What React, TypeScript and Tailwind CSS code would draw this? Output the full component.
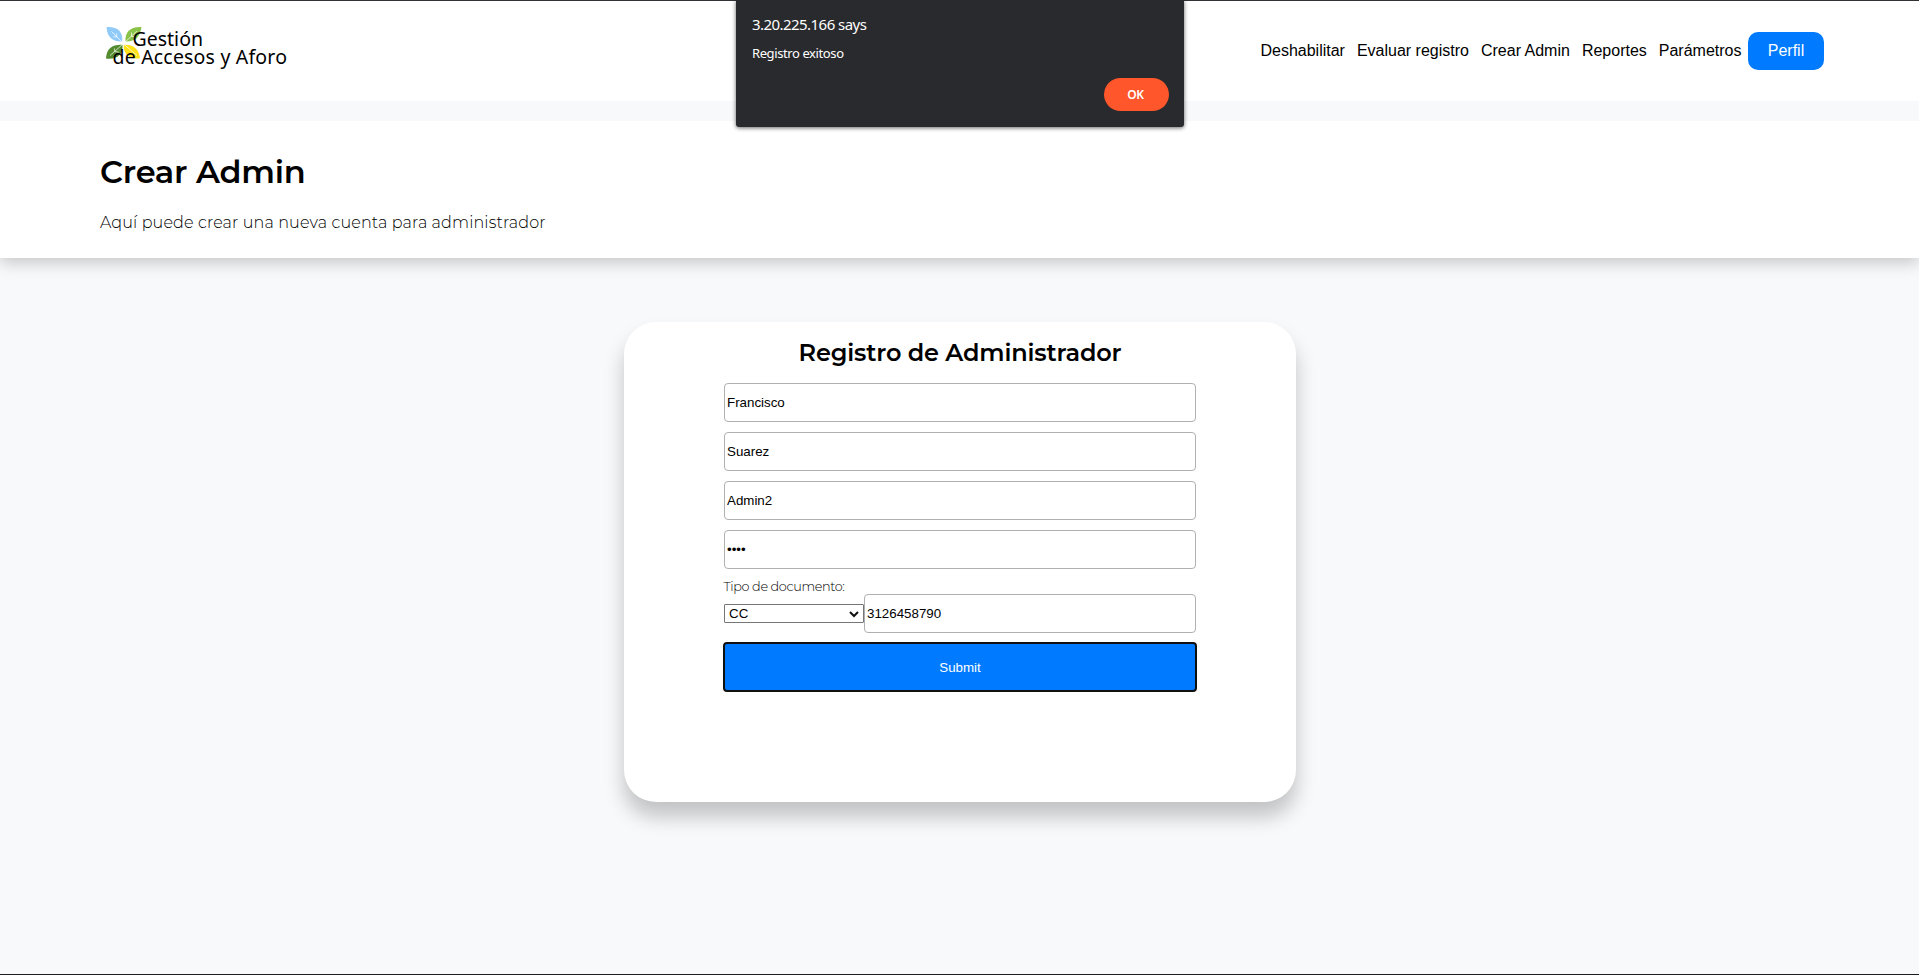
import React from "react";

const navLinks = ["Deshabilitar", "Evaluar registro", "Crear Admin", "Reportes", "Parámetros"];

const fields = [
  { id: "nombre", type: "text", value: "Francisco" },
  { id: "apellido", type: "text", value: "Suarez" },
  { id: "usuario", type: "text", value: "Admin2" },
  { id: "clave", type: "password", value: "1234" },
];

const inputClass =
  "block h-[39px] w-full rounded-[4px] border border-[#b0b0b0] bg-white px-[2.5px] font-['Liberation_Sans',Arial,sans-serif] text-[13.33px] text-black outline-none";

function Logo() {
  return (
    <svg className="h-[60px] w-[200px]" viewBox="100 10 200 60" role="img" aria-label="Gestión de Accesos y Aforo">
      <path d="M106.500 27.200c10.500-.8 16.500 4 15.700 14.300-9.500.3-15.200-4.700-15.700-14.300z" fill="#90caf9" />
      <path d="M141.500 27c-10.500-.8-16.800 4.500-16 14.500 10 .3 14.500-4.500 16-14.500z" fill="#8bc34a" />
      <path d="M106 58.500c.5-10.500 6.500-14.300 16.500-13.800.8 10-5.500 15-16.500 13.800z" fill="#558b2f" />
      <path d="M123.700 44.700c10-.5 15.300 4 16.300 13.600-10 1.200-16.700-3.600-16.300-13.600z" fill="#ffe11b" />
      <g stroke="#fff" strokeWidth="0.700" fill="none">
        <path d="M111.500 31.500l11.500 11.500M116.500 33.500l.3 3.500-3.500-.3M137 31l-13 12M131.500 32.500v4l4.500-.2M110 55.500l13-11.500M114.500 48.500l.3 3.200 4 .3M137 55.500l-14-12" />
      </g>
      <text x="132.500" y="45.700" textLength="70.500" fontFamily="Noto Sans, sans-serif" fontSize="19.500" fill="#000">Gestión</text>
      <text x="112.500" y="64" textLength="174.500" fontFamily="Noto Sans, sans-serif" fontSize="19.500" fill="#000">de Accesos y Aforo</text>
    </svg>
  );
}

function Dialog() {
  return (
    <div
      role="alertdialog"
      className="absolute left-[736px] top-0 flex h-[127px] w-[448px] flex-col rounded-b-[3px] bg-[#292a2d] px-4 pt-[13px] font-['Noto_Sans','Open_Sans',sans-serif] text-white shadow-[0_1px_4px_rgba(0,0,0,0.6)]"
    >
      <p className="text-[15px] leading-[22px] tracking-[-0.55px]">3.20.225.166 says</p>
      <p className="mt-[9px] text-[13px] leading-[18px] tracking-[-0.4px]">Registro exitoso</p>
      <button className="mr-[-0.5px] mt-[16px] h-[33px] w-[65px] self-end rounded-full bg-[#ff562b] pr-px text-[12px] font-semibold tracking-[-0.3px]">
        OK
      </button>
    </div>
  );
}

export default function App() {
  return (
    <div className="relative flex h-[975px] w-full flex-col overflow-hidden border-b border-[#1c1c1e] bg-[#f8f9fb] font-['Liberation_Sans',Arial,sans-serif] text-black">
      <header className="flex h-[101px] shrink-0 items-start justify-between border-t border-[#333136] bg-white pl-[100px] pr-[95px]">
        <div className="mt-[9px]">
          <Logo />
        </div>
        <nav className="mt-[31px] flex items-center">
          <ul className="mr-[6.5px] flex gap-[12px] text-[16px]">
            {navLinks.map((label) => (
              <li key={label}>{label}</li>
            ))}
          </ul>
          <button className="h-[38px] w-[76px] rounded-[10px] bg-[#007bff] text-[16px] text-white">Perfil</button>
        </nav>
      </header>

      <section className="mt-5 h-[137px] shrink-0 bg-white px-[100px] pt-[29px] font-['Montserrat','Inter',sans-serif] shadow-[0_5px_15px_rgba(0,0,0,0.2)] [clip-path:inset(0_0_-40px_0)]">
        <h1 className="text-[32px] font-semibold leading-[44px] tracking-[-0.22px]">Crear Admin</h1>
        <p className="mt-[17px] text-[16px] font-light leading-[24px] tracking-[0.13px]">
          Aquí puede crear una nueva cuenta para administrador
        </p>
      </section>

      <main className="mx-auto mt-[64px] h-[480px] w-[672px] shrink-0 rounded-[32px] bg-white px-[100px] pt-[16px] shadow-[0_15px_20px_rgba(0,0,0,0.22)]">
        <h2 className="pl-px text-center font-['Montserrat','Inter',sans-serif] text-[24px] font-semibold leading-[30px] tracking-[-0.15px]">
          Registro de Administrador
        </h2>
        <form className="mt-[15px] flex flex-col" onSubmit={(e) => e.preventDefault()}>
          <div className="flex flex-col gap-[10px]">
            {fields.map((f) => (
              <input key={f.id} type={f.type} defaultValue={f.value} className={inputClass} />
            ))}
          </div>
          <label className="mt-[9px] h-[16px] font-['Montserrat','Inter',sans-serif] text-[12.8px] font-light leading-[18px] tracking-[-0.36px]">
            Tipo de documento:
          </label>
          <div className="flex items-center">
            <div className="flex h-[19px] w-[140px] shrink-0 items-center justify-between rounded-[1px] border border-[#767676] bg-white pl-[4.5px] pr-[4px] text-[13.33px]">
              <span>CC</span>
              <svg className="h-[10px] w-[10px]" viewBox="0 0 10 10" fill="none" stroke="#101010" strokeWidth="2">
                <path d="M1 3l4 4 4-4" />
              </svg>
            </div>
            <input type="text" defaultValue="3126458790" className={inputClass} />
          </div>
          <button className="mx-[-1px] mt-[9px] h-[50px] rounded-[4px] border-2 border-[#101010] bg-[#007bff] pl-px pt-px text-[13.33px] text-white">
            Submit
          </button>
        </form>
      </main>

      <Dialog />
    </div>
  );
}
